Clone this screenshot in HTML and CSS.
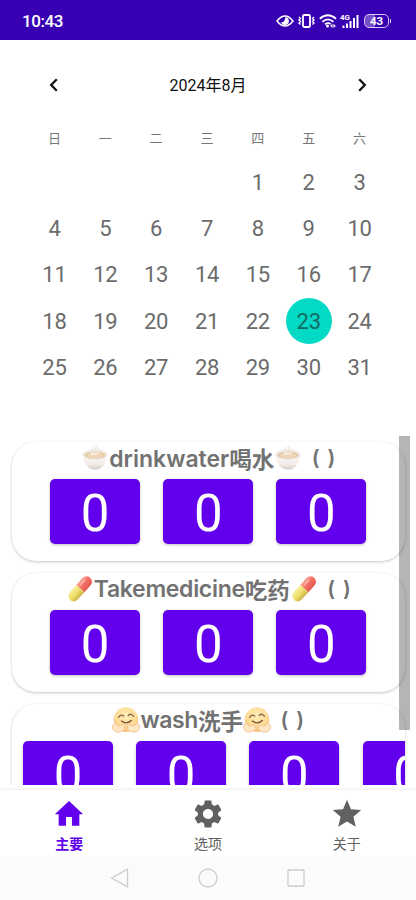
FILE: index.html
```html
<!DOCTYPE html>
<html lang="zh-CN">
<head>
<meta charset="utf-8">
<title>日历</title>
<link rel="stylesheet" href="styles.css">
</head>
<body>
<svg class="defs" width="0" height="0" aria-hidden="true">
  <defs>
    <linearGradient id="gBowl" x1="0" y1="0" x2="0" y2="1"><stop offset="0" stop-color="#fbf8f5"/><stop offset=".65" stop-color="#f1ece8"/><stop offset="1" stop-color="#d5ccc6"/></linearGradient>
    <linearGradient id="gRed" x1="0" y1="0" x2="1" y2="0"><stop offset="0" stop-color="#f7a08f"/><stop offset=".4" stop-color="#f67669"/><stop offset="1" stop-color="#e2544f"/></linearGradient>
    <linearGradient id="gYellow" x1="0" y1="0" x2="1" y2="0"><stop offset="0" stop-color="#f7ee9a"/><stop offset=".5" stop-color="#f0df6c"/><stop offset="1" stop-color="#cdb54a"/></linearGradient>
    <radialGradient id="gFace" cx=".5" cy=".35" r=".65"><stop offset="0" stop-color="#ffeeb8"/><stop offset=".65" stop-color="#fcdc93"/><stop offset="1" stop-color="#f4bb76"/></radialGradient>
    <symbol id="bowl" viewBox="0 0 26 26">
      <path d="M9 7c-1-2 2-2 2-5M13 6c-1-2 3-2 1-5M17 7c0-2 1-2 0-3" fill="none" stroke="#efedeb" stroke-width="1.6" stroke-linecap="round"/>
      <path d="M1 9.500C1 16 4 21 8 23.500c1 1.600 9 1.600 10 0 4-2.500 7-7.500 7-14z" fill="url(#gBowl)"/>
      <ellipse cx="13" cy="9.600" rx="12" ry="4.400" fill="#f4eeea" stroke="#ddd5cf" stroke-width=".7"/>
      <ellipse cx="13" cy="10" rx="10.400" ry="3.300" fill="#e7c7a0"/>
      <ellipse cx="13" cy="10.500" rx="8" ry="2.200" fill="#efd8b8"/>
      <path d="M9 9.500c2-3 5 1 8-2" fill="none" stroke="#faf5ef" stroke-width="1.500"/>
    </symbol>
    <symbol id="pill" viewBox="0 0 26 26">
      <g transform="rotate(42 13 13)">
        <path d="M7.600 13V3.800a5.400 5.400 0 0 1 10.800 0V13z" transform="translate(0 -.6)" fill="url(#gRed)"/>
        <path d="M7.600 12.400h10.800v10a5.400 5.400 0 0 1-10.800 0z" fill="url(#gYellow)"/>
        <path d="M10.500 3.500v6.500" stroke="#ffc2b6" stroke-width="1.300" stroke-linecap="round"/>
      </g>
    </symbol>
    <symbol id="hug" viewBox="0 0 28 26">
      <circle cx="14" cy="12.600" r="12.300" fill="url(#gFace)"/>
      <path d="M6.500 10.500q2.200-4 5.200-1.500M16.300 8.500q2.800-2.800 5.200.8" fill="none" stroke="#866146" stroke-width="1.300" stroke-linecap="round"/>
      <path d="M9.500 14q5 4 9.800-.5" fill="none" stroke="#7b5136" stroke-width="1.400" stroke-linecap="round"/>
      <path d="M.6 21c-.8-4 2.400-5.800 4-3.500l1.800 1.700 5-1.500c2.400 0 1.600 2 .2 2.300 2 .3 2 2 .2 2.500C9.500 25.700 1.700 27 .6 21z" fill="#ffe7c3" stroke="#edb988" stroke-width=".7"/>
      <path d="M27.400 21c.8-4-2.400-5.800-4-3.500l-1.800 1.700-5-1.500c-2.400 0-1.600 2-.2 2.300-2 .3-2 2-.2 2.500 2.300 3.200 10.100 4.500 11.200-1.500z" fill="#ffe7c3" stroke="#edb988" stroke-width=".7"/>
    </symbol>
  </defs>
</svg>
<div class="screen">
  <header class="status">
    <span class="clock">10:43</span>
    <div class="indicators">
      <svg class="eye" width="18" height="12" viewBox="0 0 18 12"><path d="M1 6Q9-4.200 17 6 9 16.200 1 6z" fill="none" stroke="#fff" stroke-width="1.500"/><path d="M9.300 2.200A3.900 3.900 0 1 1 5.200 7c1.600.7 4-.8 4.100-4.800z" fill="#fff"/></svg>
      <svg class="vibrate" width="17" height="14" viewBox="0 0 17 14" fill="none" stroke="#fff"><rect x="5" y="1" width="7" height="12" rx="1.200" stroke-width="1.800"/><path d="M1 3l1.500 1.500L1 6l1.500 1.500L1 9l1.500 1.500M16 3l-1.500 1.500L16 6l-1.500 1.500L16 9l-1.500 1.500" stroke-width="1.400"/></svg>
      <svg class="wifi" width="18" height="14" viewBox="0 0 18 14" fill="none" stroke="#fff" stroke-width="1.800"><path d="M.8 4.700q8-7 16.200 0M3.400 7.700q5.500-4.700 11 0M6 10.300q2.900-2.300 5.800-.2"/><circle cx="8.500" cy="12" r="1.500" fill="#fff" stroke="none"/><path d="M13.500 9.700l-2.300 2.200 2.300 2.100zM14.500 9.700l2.300 2.200-2.300 2.100z" fill="#fff" stroke="none"/></svg>
      <div class="cell"><span class="gen">4G</span><svg width="19" height="14" viewBox="0 0 19 14" fill="#fff"><path d="M2.500 11.500h2V14h-2zM6 9.500h2V14H6zM9.500 7h2v7h-2zM13 4h2v10h-2zM16.500 1h2v13h-2z"/></svg></div>
      <div class="battery"><span>43</span></div>
    </div>
  </header>

  <section class="calendar">
    <div class="month">
      <svg width="24" height="24" viewBox="0 0 24 24"><path d="M15.800 6.200 10.200 12l5.600 5.800" fill="none" stroke="#111" stroke-width="2.300"/></svg>
      <h1>2024年8月</h1>
      <svg width="24" height="24" viewBox="0 0 24 24"><path d="M8.200 6.200 13.800 12l-5.600 5.800" fill="none" stroke="#111" stroke-width="2.300"/></svg>
    </div>
    <div class="weekdays"><span>日</span><span>一</span><span>二</span><span>三</span><span>四</span><span>五</span><span>六</span></div>
    <div class="days">
      <span class="first">1</span><span>2</span><span>3</span>
      <span>4</span><span>5</span><span>6</span><span>7</span><span>8</span><span>9</span><span>10</span>
      <span>11</span><span>12</span><span>13</span><span>14</span><span>15</span><span>16</span><span>17</span>
      <span>18</span><span>19</span><span>20</span><span>21</span><span>22</span><span class="today">23</span><span>24</span>
      <span>25</span><span>26</span><span>27</span><span>28</span><span>29</span><span>30</span><span>31</span>
    </div>
  </section>

  <main class="list">
    <article class="card">
      <h2><svg class="emoji"><use href="#bowl"/></svg><span class="latin drink">drinkwater</span><span class="han">喝水</span><svg class="emoji"><use href="#bowl"/></svg><span class="paren">( )</span></h2>
      <div class="counts"><b>0</b><b>0</b><b>0</b></div>
    </article>
    <article class="card">
      <h2><svg class="emoji"><use href="#pill"/></svg><span class="latin take">Takemedicine</span><span class="han">吃药</span><svg class="emoji"><use href="#pill"/></svg><span class="paren">( )</span></h2>
      <div class="counts"><b>0</b><b>0</b><b>0</b></div>
    </article>
    <article class="card">
      <h2><svg class="emoji wide"><use href="#hug"/></svg><span class="latin wash">wash</span><span class="han">洗手</span><svg class="emoji wide"><use href="#hug"/></svg><span class="paren">( )</span></h2>
      <div class="counts many"><b>0</b><b>0</b><b>0</b><b>0</b></div>
    </article>
    <div class="scrollbar"></div>
  </main>

  <nav class="tabs">
    <a class="active"><svg width="34" height="34" viewBox="0 0 24 24"><path d="M9.900 20.300v-6.100h4.200v6.100h5.200v-8.100H22L12 2.900 2 12.200h2.700v8.100z"/></svg><span>主要</span></a>
    <a><svg width="34" height="34" viewBox="0 0 24 24"><path d="M19.140 12.940c.04-.3.060-.61.060-.94 0-.32-.02-.64-.07-.94l2.030-1.580a.49.49 0 0 0 .12-.61l-1.920-3.320a.488.488 0 0 0-.59-.22l-2.390.96c-.5-.38-1.030-.7-1.620-.94l-.36-2.540a.484.484 0 0 0-.48-.41h-3.840c-.24 0-.43.17-.47.41l-.36 2.540c-.59.24-1.130.57-1.620.94l-2.390-.96c-.22-.08-.47 0-.59.22L2.740 8.870c-.12.210-.08.470.120.610l2.030 1.580c-.05.3-.09.630-.09.940s.02.640.070.940l-2.030 1.580a.49.49 0 0 0-.12.610l1.920 3.320c.12.220.37.290.59.220l2.390-.96c.5.380 1.030.7 1.620.94l.36 2.540c.05.240.24.410.48.410h3.840c.24 0 .44-.17.47-.41l.36-2.540c.59-.24 1.130-.56 1.620-.94l2.390.96c.22.080.47 0 .59-.22l1.920-3.320c.12-.22.070-.47-.12-.61l-2.010-1.580zM12 15.600A3.610 3.610 0 0 1 8.400 12c0-1.980 1.620-3.600 3.600-3.600s3.600 1.620 3.600 3.600-1.620 3.600-3.600 3.600z"/></svg><span>选项</span></a>
    <a><svg width="34" height="34" viewBox="0 0 24 24"><path d="M12 17.270 18.180 21l-1.640-7.030L22 9.240l-7.190-.61L12 2 9.190 8.630 2 9.240l5.460 4.730L5.820 21z"/></svg><span>关于</span></a>
  </nav>
  <footer class="system">
    <svg width="20" height="20" viewBox="0 0 20 20"><path d="M17.500 1.200v17.600L1.700 10z"/></svg>
    <svg width="20" height="20" viewBox="0 0 20 20"><circle cx="10" cy="10" r="9"/></svg>
    <svg width="20" height="20" viewBox="0 0 20 20"><rect x="2" y="2" width="16" height="16" rx=".6"/></svg>
  </footer>
</div>
</body>
</html>
```
FILE: styles.css
```css
* { box-sizing: border-box; }
body { margin: 0; background: #fff; font-family: Roboto, "Noto Sans CJK SC", sans-serif; color: #6b6b6b; }
h1, h2 { margin: 0; }
.defs { display: block; height: 0; }
.screen { width: 416px; height: 900px; display: flex; flex-direction: column; overflow: hidden; }

.status { height: 40.400px; flex: none; background: #3700b3; color: #fff; display: flex; align-items: center; justify-content: space-between; padding: 1px 24px 0 22px; }
.clock { font-size: 17px; font-weight: 500; letter-spacing: -.4px; }
.indicators { display: flex; align-items: center; }
.eye { margin-right: 4px; }
.vibrate { margin-right: 4px; }
.wifi { margin-right: 3px; }
.cell { display: grid; margin-right: 5px; }
.cell > * { grid-area: 1 / 1; }
.gen { font-size: 8px; line-height: 8px; font-weight: 700; align-self: start; }
.battery { position: relative; width: 25px; height: 14px; border: 1px solid #d4c7f1; border-radius: 5px; background: linear-gradient(90deg, #7650cb 45%, #3700b3 45%); font-size: 11.500px; line-height: 13px; font-weight: 700; text-align: center; margin-right: 3px; }
.battery::after { content: ""; position: absolute; right: -3px; top: 4px; width: 1.500px; height: 4px; background: #d4c7f1; }

.calendar { height: 395.600px; flex: none; padding: 33px 30px 0 29px; }
.month { height: 24px; display: flex; justify-content: space-between; align-items: center; padding: 0 11px 0 12px; }
.month h1 { font-size: 16px; line-height: 24px; font-weight: 400; color: #111; padding-top: 1px; }
.weekdays, .days { display: grid; grid-template-columns: repeat(7, 50.850px); }
.weekdays { margin-top: 31px; height: 22px; font-size: 13px; line-height: 22px; text-align: center; color: #777; }
.days { margin-top: 8.700px; grid-auto-rows: 46.200px; justify-items: center; font-size: 22px; line-height: 47px; text-align: center; letter-spacing: -.3px; }
.days span { width: 46.200px; }
.days .first { grid-column: 5; }
.days .today { background: #03dac5; border-radius: 50%; color: #146b63; }

.list { position: relative; height: 349px; flex: none; padding: 6.200px 11.500px 0 12px; overflow: hidden; display: flex; flex-direction: column; gap: 11.700px; }
.card { height: 119px; flex: none; border-radius: 24px; background: #fff; box-shadow: 0 1px 3px rgba(0,0,0,.22), 0 0 1px rgba(0,0,0,.06); }
.card h2 { height: 32px; display: flex; justify-content: center; align-items: center; font-size: 23px; line-height: 32px; font-weight: 600; color: #727272; white-space: nowrap; }
.latin { font-family: Inter, sans-serif; font-weight: 600; padding-top: 1px; }
.take { letter-spacing: -.3px; }
.wash { letter-spacing: -.4px; }
.han { font-family: "Noto Sans CJK SC", sans-serif; font-weight: 700; font-size: 22.500px; }
.paren { font-family: Inter, sans-serif; font-weight: 600; width: 33px; text-align: right; font-size: 21px; word-spacing: 2.500px; }
.emoji { width: 26px; height: 26px; margin: 0 1px; }
.emoji.wide { width: 28px; margin: 0; }
.counts { display: flex; justify-content: center; gap: 23.200px; margin-top: 5px; }
.counts b { width: 90px; height: 65px; flex: none; border-radius: 5px; background: #6200ee; color: #fff; font-size: 51px; line-height: 69px; font-weight: 400; text-align: center; box-shadow: 0 1px 3px rgba(0,0,0,.25); }
.counts.many { justify-content: flex-start; padding-left: 11px; overflow: hidden; }
.scrollbar { position: absolute; left: 399px; top: 0; width: 11px; height: 294px; background: rgba(0,0,0,.29); }

.tabs { height: 66px; flex: none; margin-top: 5.500px; display: grid; grid-template-columns: repeat(3, 1fr); background: #fff; box-shadow: 0 -1px 3px rgba(0,0,0,.08); fill: #616161; color: #616161; }
.tabs a { display: flex; flex-direction: column; align-items: center; padding-top: 6.500px; font-size: 14px; line-height: 20px; }
.tabs span { margin-top: 3.500px; }
.tabs .active { color: #6200ee; fill: #6200ee; font-weight: 700; }
.system { flex: 1; background: #fbfbfb; display: flex; justify-content: center; align-items: center; gap: 68px; fill: none; stroke: #cdcdcd; stroke-width: 1.300; }
```
